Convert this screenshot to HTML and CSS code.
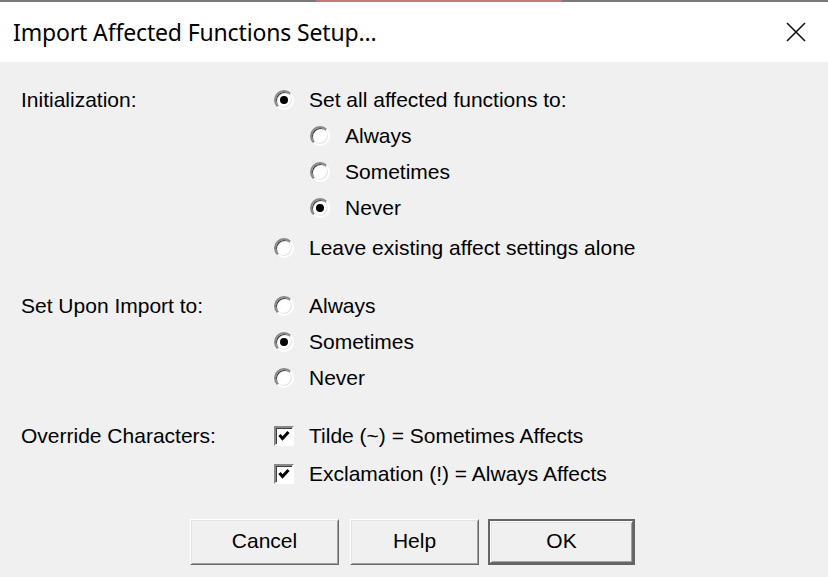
FILE: index.html
```html
<!DOCTYPE html>
<html>
<head>
<meta charset="utf-8">
<link rel="stylesheet" href="styles.css">
</head>
<body>
<div class="backdrop"><div class="red"></div></div>
<div class="titlebar">
  <span class="title">Import Affected Functions Setup...</span>
  <svg class="close" width="22" height="22" viewBox="0 0 22 22"><path d="M2 2 L20 20 M20 2 L2 20" stroke="#111" stroke-width="1.6" fill="none"/></svg>
</div>
<div class="body">
  <div class="section">
    <div class="label">Initialization:</div>
    <div class="opts">
      <div class="row"><span class="radio on"></span><span>Set all affected functions to:</span></div>
      <div class="row sub"><span class="radio"></span><span>Always</span></div>
      <div class="row sub"><span class="radio"></span><span>Sometimes</span></div>
      <div class="row sub"><span class="radio on"></span><span>Never</span></div>
      <div class="row leave"><span class="radio"></span><span>Leave existing affect settings alone</span></div>
    </div>
  </div>
  <div class="section gap">
    <div class="label">Set Upon Import to:</div>
    <div class="opts">
      <div class="row"><span class="radio"></span><span>Always</span></div>
      <div class="row"><span class="radio on"></span><span>Sometimes</span></div>
      <div class="row"><span class="radio"></span><span>Never</span></div>
    </div>
  </div>
  <div class="section gap">
    <div class="label">Override Characters:</div>
    <div class="opts">
      <div class="row"><span class="check"><svg width="14" height="14" viewBox="0 0 14 14"><path d="M2.5 6 L5.5 9.5 L11.5 3" stroke="#000" stroke-width="3" fill="none"/></svg></span><span>Tilde (~) = Sometimes Affects</span></div>
      <div class="row excl"><span class="check"><svg width="14" height="14" viewBox="0 0 14 14"><path d="M2.5 6 L5.5 9.5 L11.5 3" stroke="#000" stroke-width="3" fill="none"/></svg></span><span>Exclamation (!) = Always Affects</span></div>
    </div>
  </div>
  <div class="buttons">
    <div class="btn cancel">Cancel</div>
    <div class="btn help">Help</div>
    <div class="btn ok"><div class="okin">OK</div></div>
  </div>
</div>
</body>
</html>
```
FILE: styles.css
```css
html, body { margin: 0; padding: 0; }
body {
  width: 828px; height: 577px; overflow: hidden;
  background: #f0f0f0;
  font-family: "Liberation Sans", Arial, sans-serif;
  color: #000;
}
.backdrop { height: 2px; background: #7a7a7a; position: relative; }
.red { position: absolute; left: 316px; width: 246px; top: 0; height: 2px; background: #c07a7a; }
.titlebar {
  height: 60px; background: #fff;
  display: flex; align-items: center; justify-content: space-between;
  padding: 0 21px 0 13px;
}
.title { font-family: "Noto Sans", sans-serif; font-size: 23px; letter-spacing: -0.15px; }
.close { display: block; }
.body { padding: 20px 0 0 21px; font-size: 21px; }
.section { display: flex; }
.section.gap { margin-top: 22px; }
.label { width: 253px; height: 36px; line-height: 36px; }
.opts { display: flex; flex-direction: column; }
.row { height: 36px; display: flex; align-items: center; gap: 15px; }
.row.sub { padding-left: 36px; }
.row.leave { margin-top: 4px; }
.row.excl { margin-top: 2px; }
.radio {
  width: 20px; height: 20px; box-sizing: border-box; border-radius: 50%;
  border: 2px solid; border-color: #888 #fff #fff #888;
  background: #fff; position: relative; flex: none;
  box-shadow: inset 1px 1px 0 #404040, inset -1px -1px 0 #e3e3e3;
}
.radio.on::after {
  content: ""; position: absolute; left: 4px; top: 4px; width: 8px; height: 8px;
  border-radius: 50%; background: #000;
}
.check {
  width: 20px; height: 20px; box-sizing: border-box; flex: none;
  border: 2px solid; border-color: #888 #fff #fff #888;
  background: #fff; display: flex; align-items: center; justify-content: center;
  box-shadow: inset 1px 1px 0 #404040;
}
.check svg { display: block; }
.buttons { display: flex; padding-left: 169px; margin-top: 27px; }
.btn {
  height: 46px; box-sizing: border-box; display: flex; align-items: center; justify-content: center;
  padding-bottom: 3px;
  border: 1px solid; border-color: #fff #696969 #696969 #fff;
  box-shadow: inset 1px 1px 0 #e3e3e3, inset -1px -1px 0 #a0a0a0;
  background: #f0f0f0;
}
.cancel { width: 149px; }
.help { width: 129px; margin-left: 11px; }
.ok { width: 147px; margin-left: 9px; border: 2px solid #646464; box-shadow: none; padding: 0; }
.okin {
  width: 100%; height: 100%; box-sizing: border-box; display: flex; align-items: center; justify-content: center;
  padding-bottom: 3px;
  border: 1px solid; border-color: #fff #696969 #696969 #fff;
  box-shadow: inset 1px 1px 0 #e3e3e3, inset -1px -1px 0 #a0a0a0;
}
```
